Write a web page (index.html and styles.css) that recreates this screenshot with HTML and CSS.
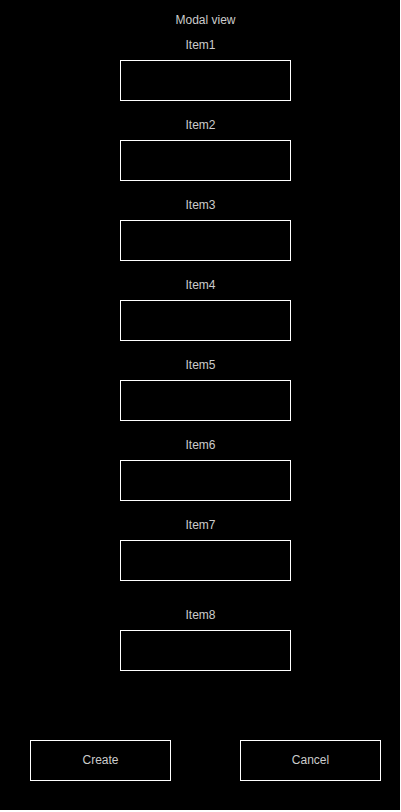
FILE: index.html
```html
<!DOCTYPE html>
<html>
<head>
<meta charset="utf-8">
<link rel="stylesheet" href="styles.css">
</head>
<body>
<div class="modal">
  <div class="column">
    <div class="title">Modal view</div>
    <div class="field"><div class="label">Item1</div><div class="box"></div></div>
    <div class="field"><div class="label">Item2</div><div class="box"></div></div>
    <div class="field"><div class="label">Item3</div><div class="box"></div></div>
    <div class="field"><div class="label">Item4</div><div class="box"></div></div>
    <div class="field"><div class="label">Item5</div><div class="box"></div></div>
    <div class="field"><div class="label">Item6</div><div class="box"></div></div>
    <div class="field"><div class="label">Item7</div><div class="box"></div></div>
    <div class="field field-last"><div class="label">Item8</div><div class="box"></div></div>
  </div>
  <div class="actions">
    <div class="btn">Create</div>
    <div class="btn">Cancel</div>
  </div>
</div>
</body>
</html>
```
FILE: styles.css
```css
html, body {
  margin: 0;
  padding: 0;
  background: #ffffff;
}
.modal {
  width: 400px;
  height: 810px;
  background: #000000;
  display: flex;
  flex-direction: column;
  box-sizing: border-box;
  padding-top: 13px;
  padding-bottom: 29px;
  font-family: "Liberation Sans", Arial, sans-serif;
  font-size: 12px;
  color: #cccccc;
}
.column {
  margin-left: 120px;
  width: 171px;
  display: flex;
  flex-direction: column;
  align-items: stretch;
  text-align: center;
}
.title {
  line-height: 14px;
  margin-bottom: 11px;
}
.field {
  display: flex;
  flex-direction: column;
  margin-bottom: 17px;
}
.field-last {
  margin-top: 10px;
  margin-bottom: 0;
}
.label {
  line-height: 14px;
  margin-bottom: 8px;
  padding-right: 10px;
}
.box {
  box-sizing: border-box;
  height: 41px;
  border: 1px solid #ffffff;
}
.actions {
  margin-top: auto;
  display: flex;
  padding-left: 30px;
  gap: 69px;
}
.btn {
  box-sizing: border-box;
  width: 141px;
  height: 41px;
  border: 1px solid #ffffff;
  padding-bottom: 2px;
  display: flex;
  align-items: center;
  justify-content: center;
}
```
